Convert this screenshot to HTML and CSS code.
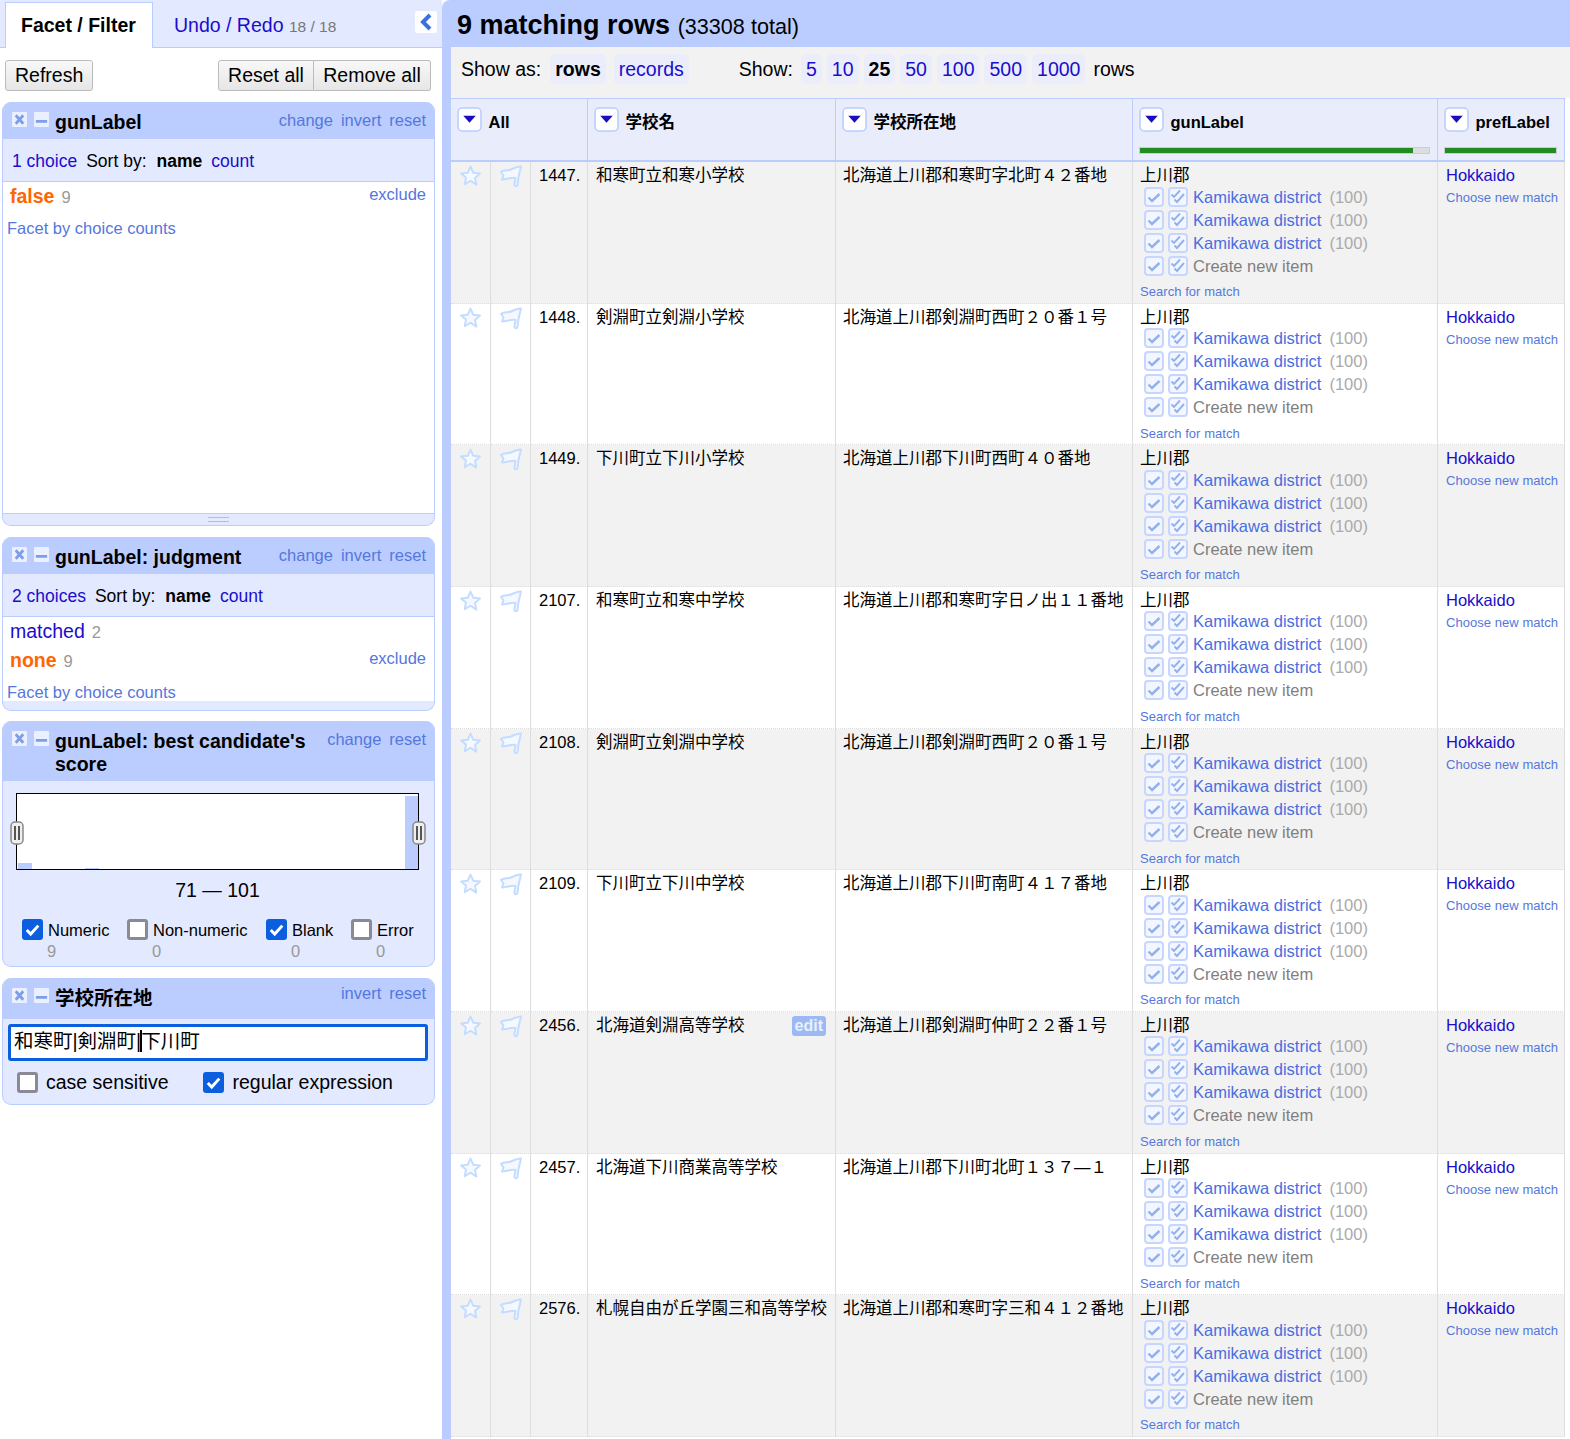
FILE: index.html
```html
<!DOCTYPE html>
<html lang="ja">
<head>
<meta charset="utf-8">
<title>OpenRefine</title>
<link rel="stylesheet" href="styles.css">
</head>
<body>
<svg class="defs" width="0" height="0" aria-hidden="true">
  <symbol id="star" viewBox="0 0 24 24"><path d="M12 2.2l2.9 6.4 7 .8-5.2 4.7 1.4 6.9L12 17l-6.100 3.500 1.400-6.900L2.100 9.400l7-.8z" fill="#f5f9ff" stroke="#c4dcff" stroke-width="2" stroke-linejoin="round"/></symbol>
  <symbol id="flag" viewBox="0 0 24 24"><path d="M2 8C5 5 9 7 12 5.500S18 2.500 22 2.500L19.500 13 18.500 21C17.500 23 15 22.500 15.500 20L16.500 14C12 13 8 15.500 3 15.500L4.500 11.500z" fill="#f5f9ff" stroke="#c4dcff" stroke-width="2" stroke-linejoin="round"/></symbol>
  <symbol id="chk1" viewBox="0 0 20 20"><rect x="1" y="1" width="18" height="18" rx="3" fill="#f3f6ff" stroke="#c6d6ff" stroke-width="2"/><path d="M4.500 10.500l3.500 3.500 7.500-7" fill="none" stroke="#91b2ee" stroke-width="2.400"/></symbol>
  <symbol id="chk2" viewBox="0 0 20 20"><rect x="1" y="1" width="18" height="18" rx="3" fill="#f3f6ff" stroke="#c6d6ff" stroke-width="2"/><path d="M3.500 7.500l2.500 2.500 6-6.500M6.500 12.500l2.500 2.500 7-8" fill="none" stroke="#91b2ee" stroke-width="1.900"/></symbol>
  <symbol id="tick" viewBox="0 0 20 20"><path d="M4.500 10.500l3.800 3.800 7.200-8" fill="none" stroke="#fff" stroke-width="2.800"/></symbol>
  <symbol id="x" viewBox="0 0 16 16"><rect width="16" height="16" rx="1" fill="#eaf0ff"/><path d="M4 3.500l8 9M12 3.500l-8 9" stroke="#7e9fe8" stroke-width="3"/></symbol>
  <symbol id="min" viewBox="0 0 16 16"><rect width="16" height="16" rx="1" fill="#eaf0ff"/><path d="M2 10h12" stroke="#7e9fe8" stroke-width="3"/></symbol>
  <symbol id="tri" viewBox="0 0 24 24"><rect x="1" y="1" width="22" height="22" rx="4" fill="#fff" stroke="#bbcdff" stroke-width="1.500"/><path d="M6 8.500h12l-6 6.500z" fill="#1a0dbb"/></symbol>
  <symbol id="grip" viewBox="0 0 14 24"><rect x="1" y="1" width="12" height="22" rx="4" fill="#eee" stroke="#888" stroke-width="1.500"/><path d="M5 5v14M9 5v14" stroke="#222" stroke-width="1.500"/></symbol>
</svg>

<div class="app">
<aside class="sidebar">
  <div class="tabs">
    <div class="tab active">Facet / Filter</div>
    <div class="tab"><a>Undo / Redo</a> <span class="tab-count">18 / 18</span></div>
    <div class="collapse"><svg width="14" height="18" viewBox="0 0 14 18"><path d="M11 2L4 9l7 7" fill="none" stroke="#3c70e0" stroke-width="4"/></svg></div>
  </div>
  <div class="actions">
    <button class="btn">Refresh</button>
    <div class="btn-group"><button class="btn">Reset all</button><button class="btn">Remove all</button></div>
  </div>

  <section class="facet">
    <header class="facet-head">
      <svg class="ico"><use href="#x"/></svg><svg class="ico"><use href="#min"/></svg>
      <div class="facet-title">gunLabel</div>
      <div class="facet-links"><a>change</a><a>invert</a><a>reset</a></div>
    </header>
    <div class="facet-sub"><a>1 choice</a><span>Sort by:</span><b>name</b><a>count</a></div>
    <div class="facet-body tall">
      <div class="choice"><a class="sel">false</a><span class="count">9</span><a class="mute exclude">exclude</a></div>
      <div class="by-counts"><a class="mute">Facet by choice counts</a></div>
    </div>
    <div class="facet-foot grip-foot"><span class="handle"></span></div>
  </section>

  <section class="facet tight">
    <header class="facet-head">
      <svg class="ico"><use href="#x"/></svg><svg class="ico"><use href="#min"/></svg>
      <div class="facet-title">gunLabel: judgment</div>
      <div class="facet-links"><a>change</a><a>invert</a><a>reset</a></div>
    </header>
    <div class="facet-sub wide"><a>2 choices</a><span>Sort by:</span><b>name</b><a>count</a></div>
    <div class="facet-body">
      <div class="choice"><a>matched</a><span class="count">2</span></div>
      <div class="choice"><a class="sel">none</a><span class="count">9</span><a class="mute exclude">exclude</a></div>
      <div class="by-counts"><a class="mute">Facet by choice counts</a></div>
    </div>
    <div class="facet-foot"></div>
  </section>

  <section class="facet">
    <header class="facet-head">
      <svg class="ico"><use href="#x"/></svg><svg class="ico"><use href="#min"/></svg>
      <div class="facet-title">gunLabel: best candidate's score</div>
      <div class="facet-links"><a>change</a><a>reset</a></div>
    </header>
    <div class="range">
      <div class="histogram">
        <i class="bar b1"></i><i class="bar b2"></i><i class="bar b3"></i>
        <svg class="drag left" viewBox="0 0 14 24"><use href="#grip"/></svg>
        <svg class="drag right" viewBox="0 0 14 24"><use href="#grip"/></svg>
      </div>
      <div class="range-value">71 — 101</div>
      <div class="range-checks">
        <div><span class="cb on"><svg><use href="#tick"/></svg></span>Numeric<em>9</em></div>
        <div><span class="cb"></span>Non-numeric<em>0</em></div>
        <div><span class="cb on"><svg><use href="#tick"/></svg></span>Blank<em>0</em></div>
        <div><span class="cb"></span>Error<em>0</em></div>
      </div>
    </div>
  </section>

  <section class="facet">
    <header class="facet-head text-head">
      <svg class="ico"><use href="#x"/></svg><svg class="ico"><use href="#min"/></svg>
      <div class="facet-title">学校所在地</div>
      <div class="facet-links"><a>invert</a><a>reset</a></div>
    </header>
    <div class="text-facet">
      <div class="search-box">和寒町|剣淵町|<i class="caret"></i>下川町</div>
      <div class="text-opts">
        <label><span class="cb"></span>case sensitive</label>
        <label><span class="cb on"><svg><use href="#tick"/></svg></span>regular expression</label>
      </div>
    </div>
  </section>
</aside>

<main class="main">
  <div class="summary"><b>9 matching rows</b> <span>(33308 total)</span></div>
  <div class="toolbar">
    <span>Show as:</span>
    <b class="pill as">rows</b><a class="pill">records</a>
    <span class="show">Show:</span>
    <a class="pill">5</a><a class="pill">10</a><b class="pill">25</b><a class="pill">50</a><a class="pill">100</a><a class="pill">500</a><a class="pill">1000</a>
    <span>rows</span>
  </div>
  <table class="grid">
    <colgroup><col class="c1"><col class="c2"><col class="c3"><col class="c4"><col class="c5"><col class="c6"><col class="c7"></colgroup>
    <thead>
      <tr>
        <th colspan="3"><div class="th-in"><svg class="menu"><use href="#tri"/></svg>All</div></th>
        <th><div class="th-in"><svg class="menu"><use href="#tri"/></svg>学校名</div></th>
        <th><div class="th-in"><svg class="menu"><use href="#tri"/></svg>学校所在地</div></th>
        <th><div class="th-in"><svg class="menu"><use href="#tri"/></svg>gunLabel</div><div class="meter"><i class="m95"></i></div></th>
        <th><div class="th-in"><svg class="menu"><use href="#tri"/></svg>prefLabel</div><div class="meter"><i class="m100"></i></div></th>
      </tr>
    </thead>
    <tbody>
      <tr class="odd">
        <td class="i"><svg class="star"><use href="#star"/></svg></td><td class="i"><svg class="flag"><use href="#flag"/></svg></td><td class="num">1447.</td>
        <td class="name">和寒町立和寒小学校</td><td>北海道上川郡和寒町字北町４２番地</td>
        <td class="recon"><div>上川郡</div>
          <div class="cand"><svg><use href="#chk1"/></svg><svg><use href="#chk2"/></svg><a>Kamikawa district</a><span>(100)</span></div>
          <div class="cand"><svg><use href="#chk1"/></svg><svg><use href="#chk2"/></svg><a>Kamikawa district</a><span>(100)</span></div>
          <div class="cand"><svg><use href="#chk1"/></svg><svg><use href="#chk2"/></svg><a>Kamikawa district</a><span>(100)</span></div>
          <div class="cand new"><svg><use href="#chk1"/></svg><svg><use href="#chk2"/></svg>Create new item</div>
          <a class="search">Search for match</a></td>
        <td class="pref"><a>Hokkaido</a><a class="search">Choose new match</a></td>
      </tr>
      <tr>
        <td class="i"><svg class="star"><use href="#star"/></svg></td><td class="i"><svg class="flag"><use href="#flag"/></svg></td><td class="num">1448.</td>
        <td class="name">剣淵町立剣淵小学校</td><td>北海道上川郡剣淵町西町２０番１号</td>
        <td class="recon"><div>上川郡</div>
          <div class="cand"><svg><use href="#chk1"/></svg><svg><use href="#chk2"/></svg><a>Kamikawa district</a><span>(100)</span></div>
          <div class="cand"><svg><use href="#chk1"/></svg><svg><use href="#chk2"/></svg><a>Kamikawa district</a><span>(100)</span></div>
          <div class="cand"><svg><use href="#chk1"/></svg><svg><use href="#chk2"/></svg><a>Kamikawa district</a><span>(100)</span></div>
          <div class="cand new"><svg><use href="#chk1"/></svg><svg><use href="#chk2"/></svg>Create new item</div>
          <a class="search">Search for match</a></td>
        <td class="pref"><a>Hokkaido</a><a class="search">Choose new match</a></td>
      </tr>
      <tr class="odd">
        <td class="i"><svg class="star"><use href="#star"/></svg></td><td class="i"><svg class="flag"><use href="#flag"/></svg></td><td class="num">1449.</td>
        <td class="name">下川町立下川小学校</td><td>北海道上川郡下川町西町４０番地</td>
        <td class="recon"><div>上川郡</div>
          <div class="cand"><svg><use href="#chk1"/></svg><svg><use href="#chk2"/></svg><a>Kamikawa district</a><span>(100)</span></div>
          <div class="cand"><svg><use href="#chk1"/></svg><svg><use href="#chk2"/></svg><a>Kamikawa district</a><span>(100)</span></div>
          <div class="cand"><svg><use href="#chk1"/></svg><svg><use href="#chk2"/></svg><a>Kamikawa district</a><span>(100)</span></div>
          <div class="cand new"><svg><use href="#chk1"/></svg><svg><use href="#chk2"/></svg>Create new item</div>
          <a class="search">Search for match</a></td>
        <td class="pref"><a>Hokkaido</a><a class="search">Choose new match</a></td>
      </tr>
      <tr>
        <td class="i"><svg class="star"><use href="#star"/></svg></td><td class="i"><svg class="flag"><use href="#flag"/></svg></td><td class="num">2107.</td>
        <td class="name">和寒町立和寒中学校</td><td>北海道上川郡和寒町字日ノ出１１番地</td>
        <td class="recon"><div>上川郡</div>
          <div class="cand"><svg><use href="#chk1"/></svg><svg><use href="#chk2"/></svg><a>Kamikawa district</a><span>(100)</span></div>
          <div class="cand"><svg><use href="#chk1"/></svg><svg><use href="#chk2"/></svg><a>Kamikawa district</a><span>(100)</span></div>
          <div class="cand"><svg><use href="#chk1"/></svg><svg><use href="#chk2"/></svg><a>Kamikawa district</a><span>(100)</span></div>
          <div class="cand new"><svg><use href="#chk1"/></svg><svg><use href="#chk2"/></svg>Create new item</div>
          <a class="search">Search for match</a></td>
        <td class="pref"><a>Hokkaido</a><a class="search">Choose new match</a></td>
      </tr>
      <tr class="odd">
        <td class="i"><svg class="star"><use href="#star"/></svg></td><td class="i"><svg class="flag"><use href="#flag"/></svg></td><td class="num">2108.</td>
        <td class="name">剣淵町立剣淵中学校</td><td>北海道上川郡剣淵町西町２０番１号</td>
        <td class="recon"><div>上川郡</div>
          <div class="cand"><svg><use href="#chk1"/></svg><svg><use href="#chk2"/></svg><a>Kamikawa district</a><span>(100)</span></div>
          <div class="cand"><svg><use href="#chk1"/></svg><svg><use href="#chk2"/></svg><a>Kamikawa district</a><span>(100)</span></div>
          <div class="cand"><svg><use href="#chk1"/></svg><svg><use href="#chk2"/></svg><a>Kamikawa district</a><span>(100)</span></div>
          <div class="cand new"><svg><use href="#chk1"/></svg><svg><use href="#chk2"/></svg>Create new item</div>
          <a class="search">Search for match</a></td>
        <td class="pref"><a>Hokkaido</a><a class="search">Choose new match</a></td>
      </tr>
      <tr>
        <td class="i"><svg class="star"><use href="#star"/></svg></td><td class="i"><svg class="flag"><use href="#flag"/></svg></td><td class="num">2109.</td>
        <td class="name">下川町立下川中学校</td><td>北海道上川郡下川町南町４１７番地</td>
        <td class="recon"><div>上川郡</div>
          <div class="cand"><svg><use href="#chk1"/></svg><svg><use href="#chk2"/></svg><a>Kamikawa district</a><span>(100)</span></div>
          <div class="cand"><svg><use href="#chk1"/></svg><svg><use href="#chk2"/></svg><a>Kamikawa district</a><span>(100)</span></div>
          <div class="cand"><svg><use href="#chk1"/></svg><svg><use href="#chk2"/></svg><a>Kamikawa district</a><span>(100)</span></div>
          <div class="cand new"><svg><use href="#chk1"/></svg><svg><use href="#chk2"/></svg>Create new item</div>
          <a class="search">Search for match</a></td>
        <td class="pref"><a>Hokkaido</a><a class="search">Choose new match</a></td>
      </tr>
      <tr class="odd">
        <td class="i"><svg class="star"><use href="#star"/></svg></td><td class="i"><svg class="flag"><use href="#flag"/></svg></td><td class="num">2456.</td>
        <td class="name editable">北海道剣淵高等学校<span class="edit">edit</span></td><td>北海道上川郡剣淵町仲町２２番１号</td>
        <td class="recon"><div>上川郡</div>
          <div class="cand"><svg><use href="#chk1"/></svg><svg><use href="#chk2"/></svg><a>Kamikawa district</a><span>(100)</span></div>
          <div class="cand"><svg><use href="#chk1"/></svg><svg><use href="#chk2"/></svg><a>Kamikawa district</a><span>(100)</span></div>
          <div class="cand"><svg><use href="#chk1"/></svg><svg><use href="#chk2"/></svg><a>Kamikawa district</a><span>(100)</span></div>
          <div class="cand new"><svg><use href="#chk1"/></svg><svg><use href="#chk2"/></svg>Create new item</div>
          <a class="search">Search for match</a></td>
        <td class="pref"><a>Hokkaido</a><a class="search">Choose new match</a></td>
      </tr>
      <tr>
        <td class="i"><svg class="star"><use href="#star"/></svg></td><td class="i"><svg class="flag"><use href="#flag"/></svg></td><td class="num">2457.</td>
        <td class="name">北海道下川商業高等学校</td><td>北海道上川郡下川町北町１３７—１</td>
        <td class="recon"><div>上川郡</div>
          <div class="cand"><svg><use href="#chk1"/></svg><svg><use href="#chk2"/></svg><a>Kamikawa district</a><span>(100)</span></div>
          <div class="cand"><svg><use href="#chk1"/></svg><svg><use href="#chk2"/></svg><a>Kamikawa district</a><span>(100)</span></div>
          <div class="cand"><svg><use href="#chk1"/></svg><svg><use href="#chk2"/></svg><a>Kamikawa district</a><span>(100)</span></div>
          <div class="cand new"><svg><use href="#chk1"/></svg><svg><use href="#chk2"/></svg>Create new item</div>
          <a class="search">Search for match</a></td>
        <td class="pref"><a>Hokkaido</a><a class="search">Choose new match</a></td>
      </tr>
      <tr class="odd">
        <td class="i"><svg class="star"><use href="#star"/></svg></td><td class="i"><svg class="flag"><use href="#flag"/></svg></td><td class="num">2576.</td>
        <td class="name">札幌自由が丘学園三和高等学校</td><td>北海道上川郡和寒町字三和４１２番地</td>
        <td class="recon"><div>上川郡</div>
          <div class="cand"><svg><use href="#chk1"/></svg><svg><use href="#chk2"/></svg><a>Kamikawa district</a><span>(100)</span></div>
          <div class="cand"><svg><use href="#chk1"/></svg><svg><use href="#chk2"/></svg><a>Kamikawa district</a><span>(100)</span></div>
          <div class="cand"><svg><use href="#chk1"/></svg><svg><use href="#chk2"/></svg><a>Kamikawa district</a><span>(100)</span></div>
          <div class="cand new"><svg><use href="#chk1"/></svg><svg><use href="#chk2"/></svg>Create new item</div>
          <a class="search">Search for match</a></td>
        <td class="pref"><a>Hokkaido</a><a class="search">Choose new match</a></td>
      </tr>
    </tbody>
  </table>
</main>
</div>
</body>
</html>
```
FILE: styles.css
```css
* { box-sizing: border-box; }
html, body { margin: 0; height: 100%; overflow: hidden; }
body { font-family: "Liberation Sans", "Noto Sans CJK JP", sans-serif; font-size: 16.500px; color: #000; background: #fff; }
.defs { position: absolute; }
a { color: #1a0dcc; }
.app { display: flex; height: 1439px; }

/* sidebar */
.sidebar { width: 442px; flex: none; }
.tabs { display: flex; height: 48px; background: #e3e9ff; border-bottom: 1px solid #bbcdff; padding: 2px 5px 0; position: relative; }
.tab { font-size: 19.500px; padding: 12px 16px 0 16px; height: 46px; white-space: nowrap; }
.tab.active { background: #fff; border: 1px solid #bbcdff; border-bottom: 0; font-weight: bold; height: 46px; padding: 11px 15px 0; width: 148px; }
.tab + .tab { padding-left: 21px; }
.tab-count { color: #777; font-size: 15.500px; }
.collapse { position: absolute; right: 5px; top: 11px; width: 22px; height: 22px; background: #fff; border-radius: 2px; display: flex; align-items: center; justify-content: center; }
.actions { display: flex; justify-content: space-between; padding: 12px 11px 12px 5px; height: 54px; }
.btn { font: 19.500px "Liberation Sans", sans-serif; height: 31px; padding: 0 9px; border: 1px solid #bbb; border-radius: 3px; background: linear-gradient(#f8f8f8, #e6e6e6); color: #000; white-space: nowrap; }
.btn-group { display: flex; }
.btn-group .btn { padding: 0; }
.btn-group .btn:first-child { border-radius: 3px 0 0 3px; width: 96px; }
.btn-group .btn:last-child { border-radius: 0 3px 3px 0; border-left: 0; width: 117px; }

.facet { margin: 0 7px 11px 2px; border-radius: 9px; overflow: hidden; background: #e3e9ff; border: 1px solid #bbcdff; border-top: 0; }
.facet.tight { margin-bottom: 10px; }
.facet-head { background: #bbcdff; min-height: 37px; padding: 8px 8px 5px 9px; display: flex; align-items: flex-start; }
.ico { width: 15px; height: 15px; margin: 2px 7px 0 0; flex: none; }
.ico + .ico { margin-right: 6px; }
.facet-title { font-size: 19.500px; font-weight: bold; line-height: 23px; flex: 1; padding-top: 1px; }
.facet-links { font-size: 16.500px; line-height: 20px; display: flex; gap: 8px; flex: none; margin: 0 0 0 10px; }
.facet-links a, .mute { color: #5577dd; }
.facet-sub { height: 43px; display: flex; align-items: center; gap: 9px; padding: 2px 9px 0; font-size: 17.500px; border-bottom: 1px solid #bbcdff; }
.facet-sub b { margin-left: 1px; }
.facet-sub a, .choice > a:first-child { color: #1a0dcc; }
.facet-body { background: #fff; padding: 0; height: 84px; }
.facet-body.tall { height: 331px; }
.choice { display: flex; align-items: baseline; padding: 0 8px 0 7px; height: 29px; font-size: 19.500px; line-height: 28px; }
.choice .count { color: #999; font-size: 16.500px; margin-left: 7px; }
.choice .sel { color: #f60; font-weight: bold; }
.choice > a.sel:first-child { color: #f60; }
.exclude { margin-left: auto; font-size: 16.500px; position: relative; top: -3px; }
.by-counts { font-size: 16.500px; padding: 7px 4px 0; line-height: 20px; }
.facet-foot { height: 9px; }
.grip-foot { height: 12px; border-top: 1px solid #bbcdff; display: flex; justify-content: center; padding-top: 3px; }
.handle { width: 21px; height: 5px; border-top: 1px solid #a9bdf0; border-bottom: 1px solid #a9bdf0; }

.range { padding: 12px 15px 0 13px; height: 185px; }
.histogram { position: relative; height: 77px; width: 403px; border: 1px solid #000; background: #fff; }
.bar { position: absolute; background: #bbcdff; bottom: 0; }
.b1 { left: 1px; width: 14px; height: 6px; }
.b2 { left: 68px; width: 14px; height: 1px; }
.b3 { right: 0; width: 13px; height: 73px; }
.drag { position: absolute; top: 27px; width: 14px; height: 24px; }
.drag.left { left: -7px; }
.drag.right { right: -8px; }
.range-value { text-align: center; font-size: 19.500px; line-height: 24px; margin-top: 8px; }
.range-checks { display: flex; margin-top: 17px; padding-left: 6px; font-size: 16.500px; line-height: 20px; }
.range-checks > div { position: relative; white-space: nowrap; display: flex; align-items: center; gap: 5px; height: 21px; }
.range-checks > div:nth-child(1) { width: 105px; }
.range-checks > div:nth-child(2) { width: 139px; }
.range-checks > div:nth-child(3) { width: 85px; }
.range-checks em { position: absolute; font-style: normal; color: #999; left: 25px; top: 22px; }
.cb { width: 21px; height: 21px; border: 3px solid #8a8a96; border-radius: 3px; background: #fff; flex: none; display: inline-block; }
.cb.on { background: #0b5fdf; border: 0; }
.cb svg { width: 21px; height: 21px; display: block; }

.text-head { min-height: 41px; }
.text-head .facet-links { margin-top: -3px; }
.text-facet { padding: 5px 6px 0 5px; height: 85px; }
.search-box { height: 37px; border: 3px solid #0b5fdf; border-radius: 3px; background: #fff; font-size: 19.500px; line-height: 28px; padding-left: 3px; width: 420px; }
.caret { display: inline-block; width: 2px; height: 22px; background: #000; vertical-align: -4px; margin: 0 -1px 0 -1px; }
.text-opts { display: flex; padding: 10px 0 0 9px; gap: 35px; font-size: 19.500px; }
.text-opts label { display: flex; align-items: center; gap: 8px; }

/* main */
.main { flex: 1; min-width: 0; border-left: 9px solid #bbcdff; border-top-left-radius: 8px; background: #fff; }
.summary { height: 47px; background: #bbcdff; padding: 7px 0 0 6px; line-height: 36px; }
.summary b { font-size: 27px; }
.summary span { font-size: 21.600px; margin-left: 3px; }
.toolbar { height: 51px; background: #f2f2f2; padding: 7px 0 0 10px; display: flex; align-items: flex-start; gap: 5px; font-size: 19.500px; line-height: 30px; }
.pill { padding: 0 5px; background: #ebeefa; border-radius: 5px; }
.toolbar > span { margin-right: 3px; }
.toolbar > span:first-child { margin-right: 4px; }
.as { margin-right: 3px; }
.show { margin-left: 45px; }
.toolbar > span:last-child { margin-left: 3px; }

.grid { border-collapse: separate; border-spacing: 0; table-layout: fixed; width: 1114px; font-size: 16.500px; }
.c1 { width: 40px; } .c2 { width: 40px; } .c3 { width: 57px; } .c4 { width: 248px; } .c5 { width: 297px; } .c6 { width: 305px; } .c7 { width: 127px; }
th { height: 64px; background: #e9ecfa; border-top: 1px solid #bbcdff; border-right: 1px solid #bbcdff; border-bottom: 2px solid #bbcdff; vertical-align: top; text-align: left; padding: 8px 6px 0; font-size: 16.500px; position: relative; }
.th-in { display: flex; align-items: flex-start; gap: 6.500px; height: 24px; line-height: 30px; }
.menu { width: 25px; height: 25px; flex: none; }
.meter { height: 7px; background: #ddd; border: 1px solid #ccc; margin: 16px 1px 0 0; }
.meter i { display: block; height: 100%; background: #228b22; }
.m95 { width: 94.500%; }
.m100 { width: 100%; }
td { height: 141.670px; vertical-align: top; padding: 3px 7px 0; border-right: 1px solid #ddd; border-bottom: 1px dotted #ddd; line-height: 20px; white-space: nowrap; overflow: hidden; }
.odd td { background: #f2f2f2; }
td.name { padding-left: 8px; }
td.num { padding: 3px 0 0 8px; }
td.i { padding: 2px 0 0 8px; }
.star { width: 23px; height: 24px; display: block; }
.flag { width: 24px; height: 24px; display: block; }
.editable { position: relative; }
.edit { position: absolute; right: 9px; top: 4px; background: #9db9f3; color: #e8efff; font-weight: bold; font-size: 16px; line-height: 20px; padding: 0 3px; border-radius: 3px; }
.cand { display: flex; align-items: center; height: 23px; padding-left: 4px; }
.cand:first-of-type { margin-top: 2px; }
.cand svg { width: 20px; height: 20px; flex: none; margin-right: 4px; }
.cand svg + svg { margin-right: 5px; }
.cand a { color: #4a6de0; }
.cand span { color: #aaa; margin-left: 8px; }
.cand.new { color: #7f7f7f; }
.search { display: block; color: #5577dd; font-size: 13px; letter-spacing: .05px; line-height: 20px; margin-top: 5px; }
.pref { padding-left: 8px; }
.pref a:first-child { display: block; color: #1a0dcc; padding-top: 0; }
.pref .search { margin-top: 3px; }
```
